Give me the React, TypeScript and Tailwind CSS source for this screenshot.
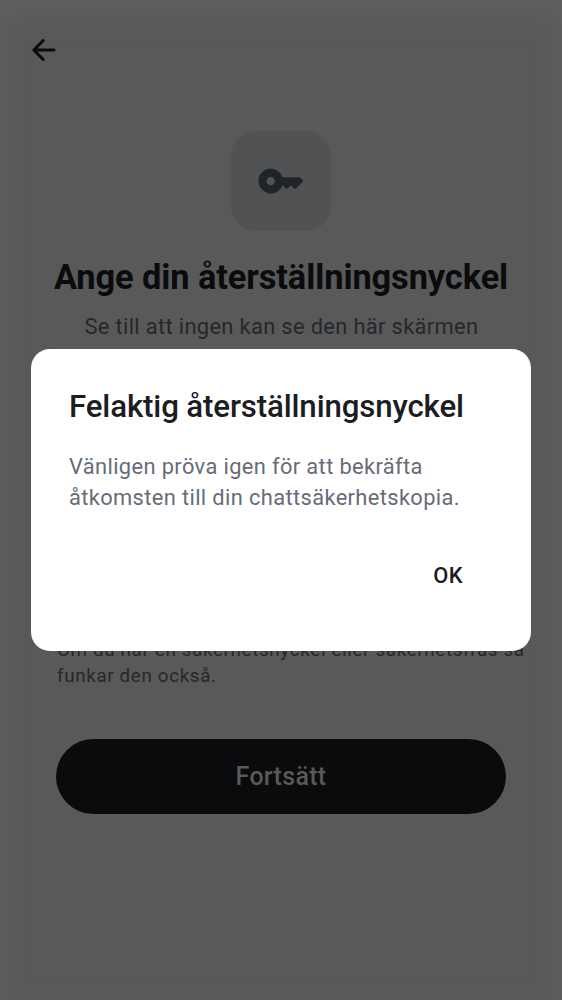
export default function App() {
  return (
    <main className="relative flex h-[1000px] w-[562px] flex-col overflow-hidden bg-[#595959] font-['Roboto',sans-serif] shadow-[inset_0_12px_28px_0px_#616161]">
      <header className="flex h-[131px] shrink-0 items-start pl-[31px] pt-[38px]">
        <button aria-label="Tillbaka">
          <svg width="25" height="24" viewBox="0 0 25 24" fill="none" stroke="#0a0b0c" strokeWidth="3" strokeLinecap="round" strokeLinejoin="round">
            <path d="M23 12H2.8M12.2 2.5L2.8 12L12.2 21.5" />
          </svg>
        </button>
      </header>
      <div className="flex size-[100px] shrink-0 items-center justify-center self-center rounded-[25px] bg-[#515254]">
        <svg width="46" height="26" viewBox="0 0 46 26" fill="#202429">
          <path fillRule="evenodd" d="M12.7.5a12.5 12.5 0 1 0 12 16.7l3.1 3.2q1 .9 2 0l3-3.1 3 3.1q1 .9 2 0l6.8-6.3q.8-1 0-2l-2.1-2.3q-.6-.5-1.4-.5H24.4A12.5 12.5 0 0 0 12.7.5Zm0 8.4a4.2 4.2 0 1 1 0 8.4 4.2 4.2 0 0 1 0-8.4Z" />
        </svg>
      </div>
      <h1 className="mt-[26px] h-[40px] shrink-0 whitespace-nowrap text-center text-[34.375px] font-bold leading-[40px] tracking-[-0.08px] text-[#0a0b0c]">Ange din återställningsnyckel</h1>
      <p className="mt-[15px] shrink-0 whitespace-nowrap pl-px text-center text-[21.875px] leading-[30px] tracking-[0.34px] text-[#24282c]">Se till att ingen kan se den här skärmen</p>
      <p className="mt-[295px] shrink-0 whitespace-nowrap pl-[57px] text-[18.75px] leading-[26px] tracking-[0.67px] text-[#24282c]">Om du har en säkerhetsnyckel eller säkerhetsfras så<br />funkar den också.</p>
      <button className="mx-[56px] mt-[50px] h-[75px] shrink-0 rounded-full bg-[#0a0b0d] text-[25px] font-medium tracking-[0.3px] text-[#595959]">Fortsätt</button>
      <section role="dialog" className="absolute left-[31px] top-[349px] flex h-[301.5px] w-[500px] flex-col rounded-[19px] bg-white px-[38px] pt-[38px]">
        <h2 className="whitespace-nowrap text-[31.25px] font-medium leading-[40px] tracking-[-0.14px] text-[#1b1d22]">Felaktig återställningsnyckel</h2>
        <p className="mt-[24px] whitespace-nowrap text-[21.875px] leading-[31px] tracking-[0.37px] text-[#656d77]">Vänligen pröva igen för att bekräfta<br />åtkomsten till din chattsäkerhetskopia.</p>
        <button className="mr-[30px] mt-[49px] self-end text-[21.875px] font-medium leading-[28px] tracking-[0.4px] text-[#1b1d22]">OK</button>
      </section>
    </main>
  )
}
